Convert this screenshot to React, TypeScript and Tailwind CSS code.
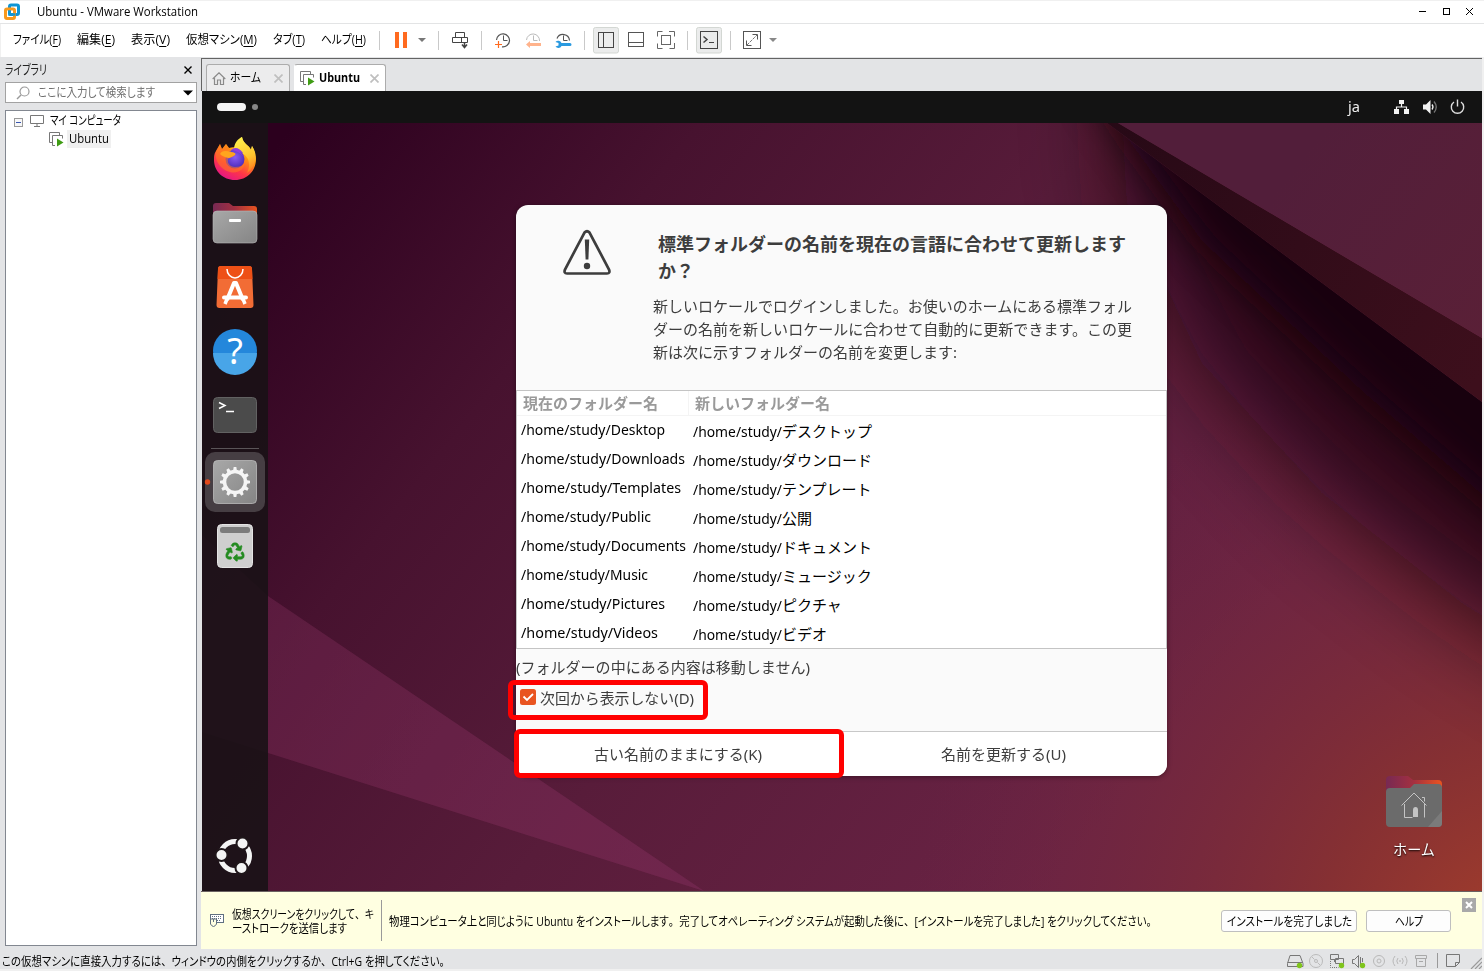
import React, { useLayoutEffect, useRef, useState } from "react";
import { FaRecycle } from "react-icons/fa";

const WIN = "font-['Open_Sans','Noto_Sans_CJK_JP',sans-serif] [font-feature-settings:'palt']";
const UBU = "font-['Noto_Sans','Noto_Sans_CJK_JP',sans-serif]";

/* Single line of text stretched horizontally to the width of its box. */
function Fit({ className = "", children }: { className?: string; children: React.ReactNode }) {
  const box = useRef<HTMLDivElement>(null);
  const inner = useRef<HTMLSpanElement>(null);
  const [scale, setScale] = useState(1);
  useLayoutEffect(() => {
    if (box.current && inner.current && inner.current.offsetWidth > 0) {
      setScale(box.current.offsetWidth / inner.current.getBoundingClientRect().width);
    }
  }, []);
  return (
    <div ref={box} className={"shrink-0 whitespace-nowrap " + className}>
      <span ref={inner} className="inline-block origin-left" style={{ transform: `scaleX(${scale})` }}>
        {children}
      </span>
    </div>
  );
}

/* Keeps Japanese punctuation at full width inside proportional kana. */
function Punct({ text }: { text: string }) {
  return (
    <>
      {text.split(/([、。])/).map((part, i) =>
        i % 2 ? <span key={i} className="[font-feature-settings:normal]">{part}</span> : part,
      )}
    </>
  );
}

function Icon({ box, className = "", children }: { box: string; className?: string; children: React.ReactNode }) {
  const [, , w, h] = box.split(" ");
  return (
    <svg viewBox={box} width={w} height={h} fill="none" className={"block shrink-0 " + className}>
      {children}
    </svg>
  );
}

function VmIcon({ className = "" }: { className?: string }) {
  return (
    <Icon box="0 0 15 15" className={className}>
      <path d="M3.5 10.5h-3V.5h10v3M6 13.500H3.500V3.500h10v3" stroke="#777" />
      <path d="M8 6.500v8l6.500-4z" fill="#3f9c14" />
    </Icon>
  );
}

function TitleBar() {
  return (
    <div className="flex h-6 shrink-0 items-center border-t border-b border-t-[#f0f0f0] border-b-[#e3e4e5] bg-white">
      <Icon box="0 0 18 18" className="ml-[3px]">
        <rect x="6.500" y="2" width="9" height="9.500" rx="1.500" stroke="#0f95d4" strokeWidth="3" />
        <rect x="2.500" y="6" width="9" height="9.500" rx="1.500" stroke="#f8991d" strokeWidth="3" />
        <path d="M6.500 7.500v4h6" stroke="#0f95d4" strokeWidth="2.500" />
      </Icon>
      <Fit className="ml-4 w-[161px] text-[12px] leading-5 text-black">Ubuntu - VMware Workstation</Fit>
      <div className="flex-1" />
      <Icon box="1416 5 62 14">
        <path d="M1419 11.500h7" stroke="#000" />
        <rect x="1443.500" y="8.500" width="6" height="6" stroke="#000" />
        <path d="M1466 8l7 7m0-7l-7 7" stroke="#000" />
      </Icon>
      <div className="w-[6px]" />
    </div>
  );
}

function MenuItem({ label, mnemonic, className }: { label: string; mnemonic: string; className: string }) {
  return (
    <Fit className={"text-[12px] leading-5 " + className}>
      {label}(<span className="underline underline-offset-2">{mnemonic}</span>)
    </Fit>
  );
}

function Sep({ className = "" }: { className?: string }) {
  return <div className={"h-[19px] w-px shrink-0 bg-[#c9c9c9] " + className} />;
}

function Toolbar() {
  return (
    <div className="ml-[1px] flex h-[33px] shrink-0 items-center bg-white pb-px text-black">
      <MenuItem label="ファイル" mnemonic="F" className="ml-3 w-12" />
      <MenuItem label="編集" mnemonic="E" className="ml-4 w-[38px]" />
      <MenuItem label="表示" mnemonic="V" className="ml-4 w-[39px]" />
      <MenuItem label="仮想マシン" mnemonic="M" className="ml-4 w-[71px]" />
      <MenuItem label="タブ" mnemonic="T" className="ml-4 w-8" />
      <MenuItem label="ヘルプ" mnemonic="H" className="ml-4 mr-px w-[45px]" />
      <Sep className="ml-3" />
      <Icon box="380 26 58 28">
        <path d="M395 32h4v16h-4zM403 32h4v16h-4z" fill="#ff6a1f" />
        <path d="M418 38h8l-4 4z" fill="#777" />
      </Icon>
      <Sep />
      <Icon box="439 26 42 28">
        <path d="M455.500 37v-4.500h9v5M452.500 37.500h15v5h-15zM461.500 37.500v5" stroke="#444" />
        <path d="M464.500 42v5m-2.500-2.500l2.500 3 2.500-3" stroke="#444" strokeWidth="1.500" />
      </Icon>
      <Sep />
      <Icon box="482 26 102 28">
        <path d="M496.500 40a6.500 6.500 0 1 1 5.500 6.800" stroke="#555" strokeWidth="1.200" />
        <path d="M503.500 35.500v5h4" stroke="#555" />
        <path d="M495 44.500h7M498.500 41v7" stroke="#ff6a1f" strokeWidth="1.200" />
        <path d="M526.500 40a6.500 6.500 0 1 1 13 1" stroke="#bbb" />
        <path d="M533.500 35.500v5h4" stroke="#bbb" />
        <path d="M526 44.500l4-3.500v2h11v3h-11v2z" fill="#ffb38c" />
        <path d="M557 38.500a6.500 6.500 0 0 1 12.500 2" stroke="#555" strokeWidth="1.200" />
        <path d="M563.500 35.500v5h4" stroke="#555" />
        <path d="M555.500 42l3 1v2.500l-3 1a3.500 3.500 0 0 0 6-.5h8.500a1.500 1.500 0 0 0 0-3h-8.500a3.500 3.500 0 0 0-6-1z" fill="#2a9ae0" />
      </Icon>
      <Sep className="mr-2" />
      <Icon box="593 26 136 28">
        <rect x="593.500" y="27.500" width="25" height="25.500" rx="2" fill="#ebecec" stroke="#d3d7d3" />
        <rect x="598.500" y="32.500" width="15" height="15" stroke="#444" />
        <path d="M603.500 32v16" stroke="#444" />
        <rect x="628.500" y="32.500" width="15" height="14" stroke="#555" />
        <path d="M628 42.500h16" stroke="#555" />
        <rect x="661.500" y="35.500" width="9" height="9" stroke="#666" />
        <path d="M657.500 36.500v-5h5M669 31.500h5.500v5M674.500 43v5.500h-5M662.500 48.500h-5v-5" stroke="#666" />
        <path d="M687.500 31v19" stroke="#c9c9c9" />
        <rect x="696.500" y="27.500" width="25" height="25.500" rx="2" fill="#ebecec" stroke="#d3d7d3" />
        <rect x="700.500" y="31.500" width="17" height="17" stroke="#444" />
        <path d="M703.500 36.500l3.500 3-3.500 3" stroke="#444" strokeWidth="1.500" />
        <path d="M709 42.500h5" stroke="#444" />
      </Icon>
      <Sep className="ml-px" />
      <Icon box="731 26 50 28">
        <rect x="743.500" y="31.500" width="17" height="17" stroke="#555" />
        <path d="M752.500 34.500h5v5M746.500 40.500v5h5" stroke="#555" />
        <path d="M747 45l10-10" stroke="#777" strokeDasharray="3 1" />
        <path d="M769 38h8l-4 4z" fill="#888" />
      </Icon>
    </div>
  );
}

function Sidebar() {
  return (
    <div className="flex w-[201px] shrink-0 flex-col bg-[#e3e4e6] pt-[2px] pl-[5px] pr-1 text-black">
      <div className="flex h-[23px] items-center">
        <Fit className="-mt-[3px] w-[42px] text-[13px] leading-5 text-[#222]">ライブラリ</Fit>
        <div className="flex-1" />
        <Icon box="0 0 8 8" className="-mt-[2px] mr-[5px]">
          <path d="M.5.5l7 7m0-7l-7 7" stroke="#000" strokeWidth="1.400" />
        </Icon>
      </div>
      <div className="flex h-[21px] items-center border border-[#a2a2a2] bg-white">
        <Icon box="0 0 14 14" className="ml-[10px]">
          <circle cx="8.500" cy="5.500" r="4.500" stroke="#999" strokeWidth="1.200" />
          <path d="M5 9l-4 4" stroke="#999" strokeWidth="1.400" />
        </Icon>
        <Fit className="ml-[8px] w-[117px] text-[12px] leading-4 text-[#6e6e6e]">ここに入力して検索します</Fit>
        <Icon box="0 0 10 6" className="ml-auto mr-[3px]">
          <path d="M0 .5h10l-5 5z" fill="#000" />
        </Icon>
      </div>
      <div className="mt-[7px] flex h-[836px] flex-col border border-[#828790] bg-white">
        <div className="flex h-[19px] items-center">
          <Icon box="0 0 9 9" className="mt-[3px] ml-2">
            <rect x=".5" y=".5" width="8" height="8" fill="#f7f7f7" stroke="#999" />
            <path d="M2 4.500h5" stroke="#3856b0" />
          </Icon>
          <Icon box="0 0 14 12" className="ml-[7px] mt-px">
            <path d="M.5.5h13v8H.5zM7 8.500v3M4 11.500h6" stroke="#777" />
          </Icon>
          <Fit className="ml-[6px] w-[71px] text-[12px] leading-5">マイ コンピュータ</Fit>
        </div>
        <div className="flex h-[18px] items-center">
          <VmIcon className="ml-[43px]" />
          <div className="ml-[3px] flex h-[18px] items-center bg-[#f0f0f0] px-[2px]">
            <Fit className="w-[40px] text-[12px] leading-[18px]">Ubuntu</Fit>
          </div>
        </div>
      </div>
    </div>
  );
}

function Cross({ className = "" }: { className?: string }) {
  return (
    <Icon box="0 0 9 9" className={className}>
      <path d="M.5.5l8 8m0-8l-8 8" stroke="#bfbfbf" strokeWidth="1.700" />
    </Icon>
  );
}

function Tabs() {
  return (
    <div className="flex h-[33px] shrink-0 items-end border-t border-l border-[#646464] bg-[#e3e4e6] pl-1 text-black">
      <div className="flex h-[27px] w-[84px] items-center rounded-t-[3px] border border-b-0 border-[#acacac] bg-[#ececed]">
        <Icon box="0 0 14 13" className="ml-[5px]">
          <path d="M.7 7L7 .8 13.300 7M2.500 6v6.500H5.500V8h3v4.500h3V6" stroke="#8a8a8a" strokeWidth="1.200" />
        </Icon>
        <Fit className="ml-1 w-[31px] text-[12px] leading-5">ホーム</Fit>
        <Cross className="ml-[13px]" />
      </div>
      <div className="ml-1 flex h-[27px] w-[92px] items-center rounded-t-[3px] border border-b-0 border-[#acacac] border-l-white bg-white">
        <VmIcon className="ml-[5px]" />
        <Fit className="ml-[4px] w-[41px] text-[12px] font-bold leading-5">Ubuntu</Fit>
        <Cross className="ml-[10px]" />
      </div>
    </div>
  );
}

function TopBar() {
  return (
    <div className="flex h-8 shrink-0 items-center bg-[#131313]">
      <div className="ml-[15px] h-2 w-[29px] rounded-full bg-[#f4f4f4]" />
      <div className="ml-[6px] h-[6px] w-[6px] rounded-full bg-[#888]" />
      <div className="flex-1" />
      <Fit className={"w-3 text-[14px] leading-8 text-[#eee] " + UBU}>ja</Fit>
      <Icon box="1360 91 122 32">
        <path d="M1399 100h5v4h-5zM1394 109h5v5h-5zM1404 109h5v5h-5z" fill="#f2f2f2" />
        <path d="M1401.500 104v3m-5 3v-3h10v3" stroke="#f2f2f2" strokeWidth="1.200" />
        <path d="M1423 104.500h3l4.500-4.500v14l-4.500-4.500h-3z" fill="#f2f2f2" />
        <path d="M1432 104.500q2 2.500 0 5" stroke="#f2f2f2" strokeWidth="1.300" />
        <path d="M1434 101.500q4.500 5.500 0 11" stroke="#777" strokeWidth="1.300" />
        <path d="M1454 102a6.200 6.200 0 1 0 7 0M1457.500 99.500v7" stroke="#ddd" strokeWidth="1.400" />
      </Icon>
    </div>
  );
}

function Wallpaper() {
  return (
    <svg viewBox="0 0 1280 768" width="1280" height="768" className="absolute inset-0 block">
      <defs>
        <linearGradient id="base" gradientUnits="userSpaceOnUse" x1="60" y1="40" x2="900" y2="700">
          <stop offset="0" stopColor="#2c001e" />
          <stop offset=".3" stopColor="#47122f" />
          <stop offset=".6" stopColor="#581c3a" />
          <stop offset="1" stopColor="#6a2344" />
        </linearGradient>
        <radialGradient id="red" gradientUnits="userSpaceOnUse" cx="1330" cy="830" r="620">
          <stop offset="0" stopColor="#a8402a" />
          <stop offset=".35" stopColor="#8a3230" stopOpacity=".85" />
          <stop offset="1" stopColor="#6c2444" stopOpacity="0" />
        </radialGradient>
        <linearGradient id="fold" gradientUnits="userSpaceOnUse" x1="60" y1="560" x2="440" y2="740">
          <stop offset="0" stopColor="#7a2a55" stopOpacity=".35" />
          <stop offset="1" stopColor="#7a2a55" stopOpacity=".85" />
        </linearGradient>
        <linearGradient id="upper" gradientUnits="userSpaceOnUse" x1="1080" y1="60" x2="1280" y2="215">
          <stop offset="0" stopColor="#521e3a" />
          <stop offset="1" stopColor="#5a2037" />
        </linearGradient>
        <linearGradient id="strip" gradientUnits="userSpaceOnUse" x1="910" y1="0" x2="1280" y2="250">
          <stop offset="0" stopColor="#270916" />
          <stop offset="1" stopColor="#3d0f1c" />
        </linearGradient>
        <filter id="soft" x="-30%" y="-30%" width="160%" height="160%"><feGaussianBlur stdDeviation="20" /></filter>
        <filter id="softer" x="-30%" y="-30%" width="160%" height="160%"><feGaussianBlur stdDeviation="48" /></filter>
        <clipPath id="below"><path d="M0 0H905L1280 279V768H0z" /></clipPath>
      </defs>
      <rect width="1280" height="768" fill="url(#base)" />
      <rect width="1280" height="768" fill="url(#red)" />
      <path d="M0 412L66 473 502 768 0 609z" fill="url(#fold)" opacity=".55" />
      <path d="M66 473L502 768 0 609V412z" fill="#7a2a55" opacity=".3" />
      <g clipPath="url(#below)">
        <path d="M915 -80L1500 100V630L1260 480 1120 370 1000 240 925 80z" fill="#1c0510" opacity=".8" filter="url(#softer)" />
        <path d="M885 -40L1400 100V475L1160 268 1000 118z" fill="#16000a" opacity=".85" filter="url(#soft)" />
      </g>
      <path d="M905 0H916L1280 215V279z" fill="url(#strip)" />
      <path d="M916 0H1280V215z" fill="url(#upper)" />
    </svg>
  );
}

function Dock() {
  const teeth = Array.from({ length: 12 }, (_, i) => i * 30);
  return (
    <div className="relative flex h-[768px] w-[66px] shrink-0 flex-col bg-[#1a1216]/[.9]">
      <Icon box="202 123 66 70">
        <defs>
          <linearGradient id="ff" x1=".8" y1=".1" x2=".3" y2="1">
            <stop offset="0" stopColor="#fff44f" /><stop offset=".35" stopColor="#ff980e" />
            <stop offset=".7" stopColor="#ff3647" /><stop offset="1" stopColor="#e31587" />
          </linearGradient>
          <radialGradient id="globe" cx=".5" cy=".4" r=".6">
            <stop offset="0" stopColor="#8a5cf5" /><stop offset="1" stopColor="#4a2bb8" />
          </radialGradient>
          <linearGradient id="flame" x1=".4" y1="0" x2=".7" y2="1">
            <stop offset="0" stopColor="#fff04a" /><stop offset=".6" stopColor="#ffc22e" /><stop offset="1" stopColor="#ff7a20" />
          </linearGradient>
        </defs>
        <path d="M216 151l4-7 2 5 4-5 3 4c3-1 6-1 8 0 1-6 2-9 5-11 1 7 7 8 9 13l1-4c3 4 4 9 4 13 0 12-9 21-21 21s-21-9-21-20c0-4 0-6 2-9z" fill="url(#ff)" />
        <path d="M234 148c1-6 4-9 8-11 1 7 7 8 9 13l1-4c6 11 3 21-5 27 4-8 2-16-4-19z" fill="url(#flame)" />
        <circle cx="235" cy="159" r="9.500" fill="url(#globe)" />
        <path d="M216 151l4-7 2 5 4-5 3 4 2 4c3 1 5 1 4 3-2 3-6 2-7 4-1 4 2 8 7 8 4 0 7-1 10-4-1 7-8 11-15 9-9-2-16-11-14-21z" fill="#ff7a20" opacity=".55" />
        <path d="M220 154q2-5 11-2 6 1 4 3-3 2-6 3-6-1-9-4z" fill="#ffa51e" />
        <path d="M231 150q6-5 12 3l-3-1 4 5q-5-6-13-7z" fill="#8f3de0" />
      </Icon>
      <Icon box="202 193 66 62">
        <defs>
          <linearGradient id="tab"><stop offset="0" stopColor="#772953" /><stop offset=".5" stopColor="#a43040" /><stop offset="1" stopColor="#e95420" /></linearGradient>
          <linearGradient id="grey" x2="1" y2="1"><stop offset="0" stopColor="#a8a8a8" /><stop offset="1" stopColor="#858585" /></linearGradient>
        </defs>
        <path d="M213 220v-14q0-3 3-3h13l4 3h21q3 0 3 3v11z" fill="url(#tab)" />
        <rect x="213" y="211" width="44" height="32" rx="4" fill="url(#grey)" stroke="#b8b8b8" strokeWidth=".6" />
        <rect x="229" y="219" width="12" height="3" rx="1" fill="#fff" />
      </Icon>
      <Icon box="202 255 66 64">
        <path d="M221 266h28q3 0 3 3l1.500 36q0 3-3 3h-31q-3 0-3-3l1.500-36q0-3 3-3z" fill="#f26c35" />
        <path d="M221 266h28q3 0 3 3l.4 10h-34.800l.4-10q0-3 3-3z" fill="#ee5016" />
        <path d="M227 269a8 9 0 0 0 16 0" stroke="#fff" strokeWidth="1.500" />
        <path d="M227 300l7-17h2l7 17" stroke="#fff" strokeWidth="4" strokeLinejoin="round" />
        <path d="M224 297.500h22" stroke="#fff" strokeWidth="4" strokeLinecap="round" />
        <path d="M227 299l-2 5M243 299l2 5" stroke="#fff" strokeWidth="3.500" />
      </Icon>
      <Icon box="202 319 66 64">
        <circle cx="235" cy="351" r="22" fill="#2487db" />
        <path d="M213 353h44a22 22 0 0 1-44 0z" fill="#48a5e8" />
        <text x="235" y="364" textAnchor="middle" fontSize="36" fill="#fff" fontFamily="Noto Sans">?</text>
      </Icon>
      <Icon box="202 383 66 66">
        <rect x="213.500" y="397.500" width="43" height="35" rx="4" fill="#4b4b4b" stroke="#626262" />
        <path d="M219 402.500l6 3-6 3M226 411.500h8" stroke="#fff" strokeWidth="1.500" />
        <path d="M211 448.500h48" stroke="#5a5558" />
      </Icon>
      <Icon box="202 449 66 67">
        <rect x="205" y="452" width="60" height="60" rx="10" fill="#463e43" />
        <circle cx="207.500" cy="482" r="2.700" fill="#e2491b" />
        <rect x="213.500" y="460.500" width="43" height="43" rx="4" fill="url(#grey)" stroke="#bbb" strokeWidth=".8" />
        <circle cx="235" cy="482" r="10.500" stroke="#f5f5f5" strokeWidth="3.500" />
        {teeth.map((a) => (
          <path key={a} d="M233 471l.7-4h2.600l.7 4z" fill="#f5f5f5" transform={`rotate(${a} 235 482)`} />
        ))}
      </Icon>
      <Icon box="202 516 66 64">
        <rect x="217.500" y="524.500" width="35" height="43" rx="4" fill="#cfcfcf" stroke="#e4e4e4" />
        <rect x="220" y="527" width="30" height="6" rx="2.500" fill="#7c7c7c" />
        <FaRecycle x={225.5} y={542.5} width={19} height={19} size={19} color="#258c22" stroke="#258c22" strokeWidth={16} />
      </Icon>
      <Icon box="202 830 66 50" className="mt-auto mb-[11px]">
        <circle cx="235" cy="856" r="14.500" stroke="#f4f4f4" strokeWidth="5" />
        <g fill="#f4f4f4" stroke="#1f161a" strokeWidth="2">
          <circle cx="221.500" cy="855" r="6" /><circle cx="242.500" cy="843.500" r="6" /><circle cx="241.500" cy="868" r="6" />
        </g>
      </Icon>
    </div>
  );
}

const folders = [
  ["Desktop", "デスクトップ", "w-[144px]"],
  ["Downloads", "ダウンロード", "w-[164px]"],
  ["Templates", "テンプレート", "w-[160px]"],
  ["Public", "公開", "w-[130px]"],
  ["Documents", "ドキュメント", "w-[165px]"],
  ["Music", "ミュージック", "w-[127px]"],
  ["Pictures", "ピクチャ", "w-[144px]"],
  ["Videos", "ビデオ", "w-[137px]"],
];

function Dialog() {
  return (
    <div className={"absolute left-[314px] top-[82px] flex h-[571px] w-[651px] flex-col rounded-xl bg-[#fafafa] text-[15px] text-[#3d3d3d] shadow-[0_1px_5px_rgba(0,0,0,.4)] [font-feature-settings:normal] " + UBU}>
      <div className="flex h-[185px] shrink-0">
        <Icon box="0 0 50 48" className="mt-[24px] ml-[46px]">
          <path d="M22.500 3.500Q25 1 27.500 3.500L47 40.500Q48.500 44.500 45 44.500H5Q1.500 44.500 3 40.500z" stroke="#3d3d3d" strokeWidth="2.700" />
          <path d="M22.800 10.500h4.400l-.8 20h-2.800z" fill="#3d3d3d" />
          <circle cx="25" cy="37" r="3.200" fill="#3d3d3d" />
        </Icon>
        <div className="ml-[41px] pt-[26px]">
          <div className="pl-[5px] text-[18px] font-bold leading-[27px]">
            <Fit className="w-[468px]">標準フォルダーの名前を現在の言語に合わせて更新します</Fit>
            <div>か？</div>
          </div>
          <div className="mt-[10px] leading-[23px]">
            <Fit className="w-[479px]">新しいロケールでログインしました。お使いのホームにある標準フォル</Fit>
            <Fit className="w-[479px]">ダーの名前を新しいロケールに合わせて自動的に更新できます。この更</Fit>
            <Fit className="w-[304px]">新は次に示すフォルダーの名前を変更します:</Fit>
          </div>
        </div>
      </div>
      <div className="h-[259px] shrink-0 border border-[#c4c4c4] bg-white text-black">
        <div className="flex h-[25px] border-b border-[#f4f4f4] font-bold leading-6 text-[#9a9a9a]">
          <div className="w-[172px] border-r border-[#f4f4f4] pl-[6px]"><Fit className="w-[135px]">現在のフォルダー名</Fit></div>
          <div className="pl-[6px]"><Fit className="w-[135px]">新しいフォルダー名</Fit></div>
        </div>
        {folders.map(([en, ja, w]) => (
          <div key={en} className="flex h-[29px] pl-1">
            <div className="w-[172px] leading-[26px]"><Fit className={w}>/home/study/{en}</Fit></div>
            <Fit className="w-[89px] leading-[31px]">/home/study/</Fit>
            <div className="leading-[31px]">{ja}</div>
          </div>
        ))}
      </div>
      <Fit className="mt-[6px] w-[294px] leading-6">(フォルダーの中にある内容は移動しません)</Fit>
      <div className="mt-[7px] flex h-6 items-center pl-1">
        <Icon box="0 0 16 16" className="-mt-[3px]">
          <rect width="16" height="16" rx="2.500" fill="#e95420" />
          <path d="M3.500 7.500l3.500 3.500 6-6" stroke="#fff" strokeWidth="1.800" />
        </Icon>
        <Fit className="ml-1 w-[154px] leading-6">次回から表示しない(D)</Fit>
      </div>
      <div className="mt-auto flex h-[45px] shrink-0 rounded-b-xl border-t border-[#c8c8c8] bg-white leading-[44px]">
        <div className="flex w-[324px] justify-center"><Fit className="w-[168px]">古い名前のままにする(K)</Fit></div>
        <div className="flex w-[326px] justify-center"><Fit className="w-[125px]">名前を更新する(U)</Fit></div>
      </div>
      <div className="absolute left-[-8px] top-[475px] h-[40px] w-[200px] rounded-[6px] border-[5px] border-[#f00]" />
      <div className="absolute left-[-2px] top-[524px] h-[49px] w-[330px] rounded-[6px] border-[5px] border-[#f00]" />
    </div>
  );
}

function Desktop() {
  return (
    <div className="relative flex h-[768px] shrink-0 overflow-hidden">
      <Wallpaper />
      <Dock />
      <Dialog />
      <div className="absolute left-[1184px] top-[650px] flex w-14 flex-col items-center">
        <Icon box="0 0 56 56">
          <path d="M0 20V7q0-4 4-4h18l5 4h25q4 0 4 4v9z" fill="url(#tab)" />
          <path d="M0 19q0-4 4-4h20l4-4h24q4 0 4 4v35q0 4-4 4H4q-4 0-4-4z" fill="#6b6b6b" />
          <path d="M56 38v12q0 4-4 4H42z" fill="#7b7b7b" />
          <path d="M15.500 32.500L28 20l12.500 12.500M18.500 31v13.500h8M38.500 31v13.500M36 24.500h2.500v4" stroke="#c4c4c4" />
          <path d="M27 44v-7q0-3 2.500-3t2.500 3v7z" fill="#c4c4c4" />
        </Icon>
        <Fit className={"mt-[8px] w-[42px] text-[14.5px] leading-6 text-white [font-feature-settings:normal] [text-shadow:0_1px_2px_#000] " + UBU}>ホーム</Fit>
      </div>
    </div>
  );
}

function HintBar() {
  return (
    <div className="ml-[-1px] flex h-[58px] shrink-0 border-t border-[#6b6262] bg-[#ffffe1] pl-2 text-[12px] text-black">
      <Icon box="209 892 16 57">
        <rect x="210.500" y="914.500" width="13" height="8" stroke="#607080" fill="#fff" />
        <path d="M212 916.500h10M212 918.500h10M213 920.500h8" stroke="#607080" strokeDasharray="1 1" />
        <path d="M210.500 919h6v5q-3 5-6 0zM213.500 919v3" stroke="#607080" fill="#ffffe1" />
      </Icon>
      <div className="ml-[7px] w-[149px] pt-4 leading-[14px]">
        <Fit className="w-[142px]"><Punct text="仮想スクリーンをクリックして、キ" /></Fit>
        <Fit className="w-[115px]">ーストロークを送信します</Fit>
      </div>
      <div className="mt-2 h-[41px] w-px bg-[#9a9a9a]" />
      <Fit className="ml-[7px] w-[768px] leading-[60px]">
        <Punct text="物理コンピュータ上と同じように Ubuntu をインストールします。完了してオペレーティング システムが起動した後に、[インストールを完了しました] をクリックしてください。" />
      </Fit>
      <div className="flex-1" />
      <div className="mt-[18px] mr-[9px] flex h-[22px] w-[136px] items-center justify-center rounded-[3px] border border-[#bfbfbf] bg-[#fdfdfd]">
        <Fit className="mt-px w-[125px] leading-5">インストールを完了しました</Fit>
      </div>
      <div className="mt-[18px] mr-[11px] flex h-[22px] w-[85px] items-center justify-center rounded-[3px] border border-[#bfbfbf] bg-[#fdfdfd]">
        <Fit className="mt-px w-[28px] leading-5">ヘルプ</Fit>
      </div>
      <Icon box="0 0 14 14" className="mt-[6px] mr-[6px]">
        <rect width="14" height="14" fill="#a9a9a9" />
        <path d="M4 4l6 6m0-6l-6 6" stroke="#fff" strokeWidth="2" />
      </Icon>
    </div>
  );
}

function StatusBar() {
  return (
    <div className="flex h-[19px] w-[1482px] shrink-0 items-center bg-[#e3e4e6] pl-[2px] text-black">
      <Fit className="mt-[3px] w-[448px] text-[12px] leading-[19px]">
        <Punct text="この仮想マシンに直接入力するには、ウィンドウの内側をクリックするか、Ctrl+G を押してください。" />
      </Fit>
      <div className="flex-1" />
      <Icon box="1282 950 200 19">
        <path d="M1290 955.500h10l3 8v3h-15.500v-3zM1287.500 962.500h15" stroke="#777" />
        <g stroke="#bbb"><circle cx="1316" cy="961" r="6.500" /><circle cx="1316" cy="961" r="1.500" /><path d="M1312 957l2.500 2.500m3 3l2.500 2.500" /></g>
        <path d="M1330.500 954.500h8v5h-8zM1335.500 958.500h8v5h-8zM1334.500 960v2" stroke="#777" fill="#e3e4e6" />
        <path d="M1330.500 961v6.500h8" stroke="#777" strokeDasharray="1 1" />
        <path d="M1352.500 959.500h2l4-4v12l-4-4h-2zM1360.500 957v8M1362.500 958v4" stroke="#777" />
        <g fill="#7fc41c"><circle cx="1299.500" cy="965.500" r="2.700" /><circle cx="1341.500" cy="965.500" r="2.700" /><circle cx="1362.500" cy="965.500" r="2.700" /></g>
        <g stroke="#b8b8b8"><circle cx="1379" cy="961" r="5.500" /><circle cx="1379" cy="961" r="2" /></g>
        <g stroke="#b8b8b8"><path d="M1395 956q-4 5 0 10M1398 958q-2.500 3 0 6M1405 956q4 5 0 10M1402 958q2.500 3 0 6" /><circle cx="1400" cy="961" r=".5" /></g>
        <path d="M1415.500 955.500h11v3h-11zM1416.500 958.500h9v8h-9zM1419 961.500h4" stroke="#a8a8a8" />
        <path d="M1437.500 953v15" stroke="#999" />
        <path d="M1446.500 954.500h13v8l-4 4h-9zM1459.500 962.500h-4v4" stroke="#777" />
        <path d="M1471 969l11-11M1475 969l7-7M1479 969l3-3" stroke="#999" strokeWidth="1.200" />
      </Icon>
    </div>
  );
}

export default function App() {
  return (
    <div className={"flex h-[971px] w-[1484px] flex-col overflow-hidden bg-[#f0f0f0] " + WIN}>
      <TitleBar />
      <Toolbar />
      <div className="flex h-[893px] w-[1482px] shrink-0 bg-[#e3e4e6]">
        <Sidebar />
        <div className="flex w-[1281px] shrink-0 flex-col pt-px">
          <Tabs />
          <div className="flex flex-col pl-px">
            <TopBar />
            <Desktop />
            <HintBar />
          </div>
        </div>
      </div>
      <StatusBar />
    </div>
  );
}
